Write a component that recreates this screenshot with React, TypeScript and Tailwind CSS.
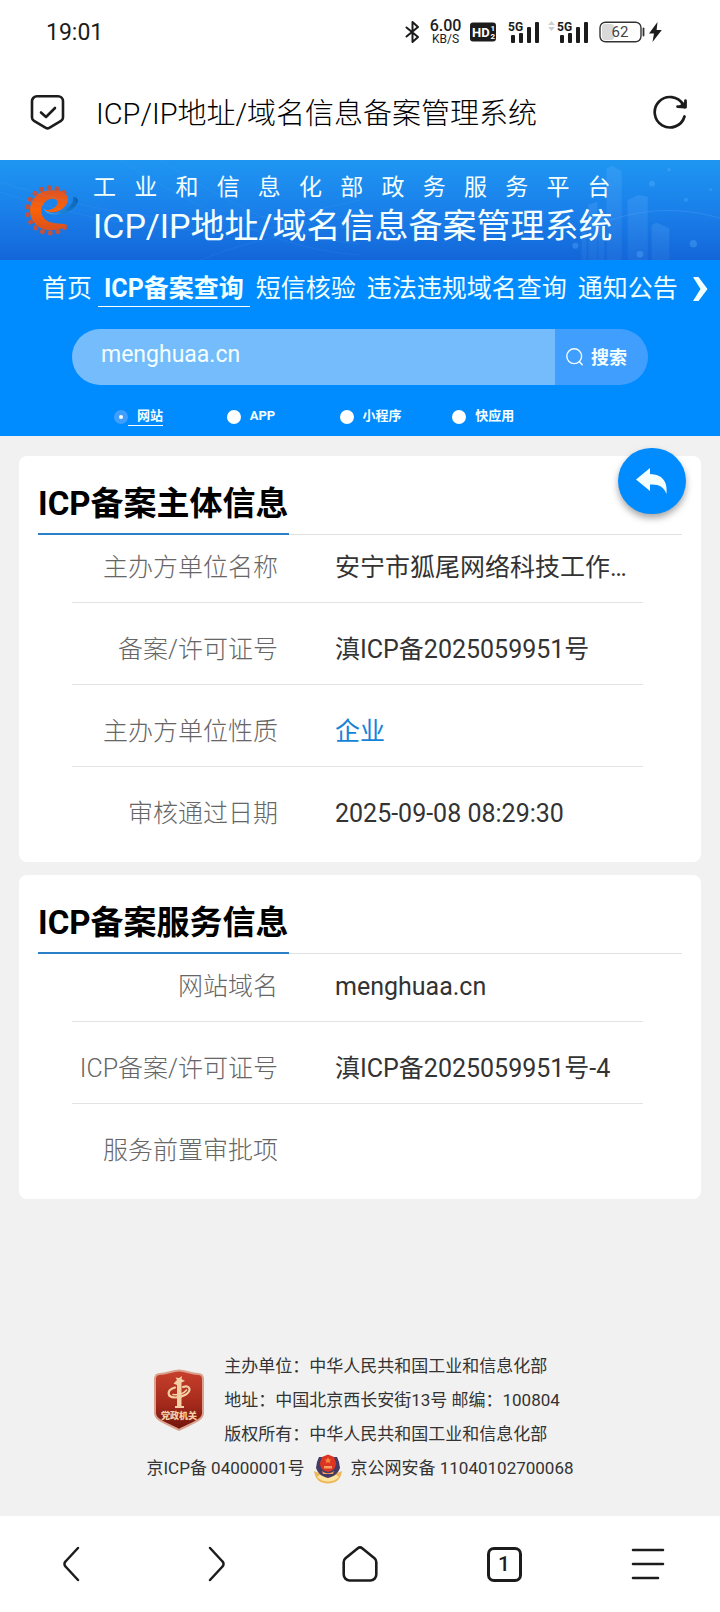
import React from "react";

type Field = { label: string; value: string; link?: boolean };

const subjectFields: Field[] = [
  { label: "主办方单位名称", value: "安宁市狐尾网络科技工作…" },
  { label: "备案/许可证号", value: "滇ICP备2025059951号" },
  { label: "主办方单位性质", value: "企业", link: true },
  { label: "审核通过日期", value: "2025-09-08 08:29:30" },
];

const serviceFields: Field[] = [
  { label: "网站域名", value: "menghuaa.cn" },
  { label: "ICP备案/许可证号", value: "滇ICP备2025059951号-4" },
  { label: "服务前置审批项", value: "" },
];

const navItems = ["首页", "ICP备案查询", "短信核验", "违法违规域名查询", "通知公告"];
const kinds = ["网站", "APP", "小程序", "快应用"];

function Signal() {
  return (
    <svg width="32" height="24" viewBox="0 0 32 24" fill="#1c1c1c" aria-hidden="true">
      <text x="0" y="11" fontSize="12" fontWeight="700" fontFamily="Roboto, sans-serif">5G</text>
      <rect x="3" y="15" width="4" height="8" rx="1" />
      <rect x="11" y="13" width="4" height="10" rx="1" />
      <rect x="19" y="7" width="4" height="16" rx="1" />
      <rect x="27" y="2" width="4" height="21" rx="1" />
    </svg>
  );
}

function StatusBar() {
  return (
    <div className="flex h-16 items-center justify-between pr-[58px] pl-[46px] text-[#1c1c1c]">
      <span className="pt-[2px] text-[23px]">19:01</span>
      <div className="flex items-center">
        <svg className="mr-[9px]" width="15" height="24" viewBox="0 0 15 24" fill="none" stroke="#1c1c1c" strokeWidth="2" strokeLinejoin="round" strokeLinecap="round" aria-hidden="true">
          <path d="M1.5 7.5 13 17 7.5 22V2L13 7 1.5 16.5" />
        </svg>
        <div className="mr-2 flex w-[33px] flex-col items-center">
          <span className="text-[16px] leading-[14px] font-medium">6.00</span>
          <span className="text-[12px] leading-[12px]">KB/S</span>
        </div>
        <svg className="mr-3" width="26" height="20" viewBox="0 0 26 20" aria-hidden="true">
          <rect width="26" height="19" y="0.5" rx="3" fill="#1c1c1c" />
          <g fill="#fff" fontFamily="Roboto, sans-serif" fontWeight="700">
            <text x="2" y="15" fontSize="13">HD</text>
            <text x="20.500" y="9" fontSize="8">1</text>
            <text x="20.500" y="17" fontSize="8">2</text>
          </g>
        </svg>
        <Signal />
        <svg className="mr-[2px] ml-2 -mt-3" width="7" height="10" viewBox="0 0 7 10" fill="#cfcfcf" aria-hidden="true">
          <path d="M0 4 3.5 0 7 4zM0 6h7L3.5 10z" />
        </svg>
        <Signal />
        <svg className="mr-1 ml-[10px]" width="46" height="22" viewBox="0 0 46 22" aria-hidden="true">
          <rect x="3" y="3" width="12" height="16" rx="3" fill="#d9d9d9" />
          <rect x="1" y="1.2" width="41" height="19.6" rx="5.5" fill="none" stroke="#333" strokeWidth="1.4" />
          <path d="M44.5 7.5v7" stroke="#333" strokeWidth="1.8" strokeLinecap="round" />
          <text x="21" y="16.2" fontSize="15" fill="#444" textAnchor="middle" fontFamily="Roboto, sans-serif">62</text>
        </svg>
        <svg width="13" height="20" viewBox="0 0 13 20" fill="#1c1c1c" aria-hidden="true">
          <path d="M8.5 0 0 11.5h5L3.5 20 12.8 8H7.6z" />
        </svg>
      </div>
    </div>
  );
}

function AddressBar() {
  return (
    <div className="flex h-24 items-center pr-[32px] pl-[30px]">
      <svg className="shrink-0" width="36" height="36" viewBox="0 0 36 36" fill="none" stroke="#1c1c1c" strokeWidth="2.6" strokeLinejoin="round" strokeLinecap="round" aria-hidden="true">
        <path d="M7 2.300h21a5 5 0 0 1 5 5v16.200a4 4 0 0 1-2 3.400L19.300 33.800a3.400 3.400 0 0 1-3.500 0L4 26.900a4 4 0 0 1-2-3.400V7.300a5 5 0 0 1 5-5z" />
        <path d="m11 18.500 5 4.500 9-9" />
      </svg>
      <h1 className="ml-[30px] flex-1 truncate pt-1 text-[29px] leading-[40px] font-light text-black">
        ICP/IP地址/域名信息备案管理系统
      </h1>
      <button type="button" aria-label="刷新" className="shrink-0">
        <svg width="35" height="36" viewBox="0 0 35 36" fill="none" stroke="#1c1c1c" strokeWidth="2.7" strokeLinecap="round" strokeLinejoin="round">
          <path d="M31.500 22.500A15.200 15.200 0 1 1 30 10.500L31.500 13" />
          <path d="M24.500 12.600 32.500 13.200V6.500" />
          <path d="M26 12.500 32.500 13.200V8z" fill="#1c1c1c" strokeWidth="1.500" />
        </svg>
      </button>
    </div>
  );
}

function GearLogo() {
  return (
    <svg className="mt-[13px] shrink-0" width="56" height="53" viewBox="73 85 168 159" aria-hidden="true">
      <defs>
        <linearGradient id="gear" x1="0" y1="0" x2="0" y2="1">
          <stop offset="0" stopColor="#dd5526" />
          <stop offset="0.500" stopColor="#fb6206" />
          <stop offset="1" stopColor="#d9501f" />
        </linearGradient>
        <linearGradient id="swirl" x1="0" y1="0" x2="1" y2="0">
          <stop offset="0" stopColor="#7cc4ee" />
          <stop offset="0.500" stopColor="#1b86cf" />
          <stop offset="1" stopColor="#0a62b4" />
        </linearGradient>
      </defs>
      <path d="M195 216A68 68 0 1 1 195 112" fill="none" stroke="#bf5240" strokeWidth="15" strokeLinecap="round" strokeDasharray="0.100 23.300" />
      <path d="M203 208C190 220 170 224 151 224A60 60 0 0 1 151 104C190 101 207 116 205 134 202 152 180 170 160 170 150 170 142 168 136 162 150 166 168 158 173 145 178 128 152 124 137 138 114 160 124 196 162 202 178 204 193 204 203 208Z" fill="url(#gear)" />
      <path d="M132 158C142 186 200 180 224 154 242 138 236 122 220 124 224 144 204 158 184 168 162 178 142 174 132 158Z" fill="url(#swirl)" />
    </svg>
  );
}

function Banner() {
  return (
    <div className="relative flex h-[100px] overflow-hidden bg-linear-to-b from-[#1f96f2] via-[#1a80ea] to-[#1466d8] pt-[11px] pl-[24px] text-[#f4ffff]">
      <svg className="absolute top-0 right-0" width="180" height="100" viewBox="540 15 540 300" aria-hidden="true">
        <defs>
          <linearGradient id="tower" x1="0" y1="0" x2="0" y2="1">
            <stop offset="0" stopColor="#7fc0ff" stopOpacity="0.18" />
            <stop offset="1" stopColor="#7fc0ff" stopOpacity="0.08" />
          </linearGradient>
        </defs>
        <g fill="url(#tower)">
          <path d="M740 40 755 32 785 48V315H740z" />
          <path d="M803 135 835 120 863 125V315H803z" />
          <path d="M875 210 890 203 928 220V315H875z" />
          <path d="M685 150 712 140V315H685z" />
          <path d="M665 230h15v85h-15zM715 180h18v135h-18z" />
        </g>
        <path d="M700 215C850 150 980 160 1080 190" fill="none" stroke="#62b1fb" strokeOpacity="0.250" strokeWidth="3" />
        <g fill="#5fb2ff" fillOpacity="0.350">
          <circle cx="876" cy="86" r="9" />
          <circle cx="927" cy="44" r="5" />
          <circle cx="978" cy="134" r="6" />
          <circle cx="1000" cy="266" r="11" />
          <circle cx="646" cy="272" r="9" />
          <circle cx="840" cy="298" r="10" />
          <circle cx="1052" cy="104" r="4" />
        </g>
      </svg>
      <svg className="absolute top-0 left-0" width="360" height="100" viewBox="0 0 360 100" fill="none" stroke="#6bbcff" strokeOpacity="0.100" aria-hidden="true">
        <path d="M0 22C90 50 200 80 360 40M0 32C90 60 210 92 360 52M120 0C200 50 280 90 360 95M160 0C230 45 300 80 360 84M200 100C250 80 300 70 360 66" />
      </svg>
      <GearLogo />
      <div className="relative ml-[13px] grid content-start">
        <p className="pr-[2px] text-[23px] leading-[34px] [text-align-last:justify]">工业和信息化部政务服务平台</p>
        <p className="text-[34px] leading-[42px] whitespace-nowrap">ICP/IP地址/域名信息备案管理系统</p>
      </div>
    </div>
  );
}

function SiteNav() {
  return (
    <nav className="flex items-center gap-px pt-[11px] pl-[37px] text-[25px] leading-[35px] whitespace-nowrap text-[#f0ffff]">
      {navItems.map((item, i) => (
        <a
          key={item}
          href="#"
          className={i === 1 ? "border-b border-white px-[6px] font-bold" : "border-b border-transparent px-[5px]"}
        >
          {item}
        </a>
      ))}
      <button type="button" aria-label="更多" className="ml-[9px]">
        <svg width="15" height="24" viewBox="0 0 15 24" fill="#f0ffff">
          <path d="M0 0H5.5L14.5 12 5.5 24H0L7.5 12z" />
        </svg>
      </button>
    </nav>
  );
}

function SearchForm() {
  return (
    <form className="px-[72px] pt-[22px] pb-[10px]" onSubmit={(e) => e.preventDefault()}>
      <div className="flex h-14 overflow-hidden rounded-full">
        <input
          type="text"
          aria-label="搜索内容"
          defaultValue="menghuaa.cn"
          className="min-w-0 flex-1 bg-[#74bcfb] pb-1 pl-[29px] text-[23px] text-[#f4ffff] outline-none"
        />
        <button type="submit" className="flex w-[93px] items-center gap-2 bg-[#409eff] pl-[11px] text-[18px] font-bold text-[#f4ffff]">
          <svg width="17" height="18" viewBox="0 0 17 18" fill="none" stroke="#f4ffff" strokeWidth="1.4" strokeLinecap="round" aria-hidden="true">
            <circle cx="8.2" cy="8.2" r="7.4" />
            <path d="m13.5 13.8 2.7 3" />
          </svg>
          搜索
        </button>
      </div>
      <div className="mr-[83px] ml-[42px] grid grid-cols-4 pt-[22px]">
        {kinds.map((kind, i) => (
          <label key={kind} className="flex items-center text-[13px] leading-[18px] font-bold text-[#f4ffff]">
            <input
              type="radio"
              name="kind"
              defaultChecked={i === 0}
              className="peer size-[14px] shrink-0 appearance-none rounded-full border-[5px] border-white bg-white checked:border-[#409eff]"
            />
            <span className="border-b border-transparent pl-[9px] peer-checked:border-white">{kind}</span>
          </label>
        ))}
      </div>
    </form>
  );
}

function InfoCard({ title, fields }: { title: string; fields: Field[] }) {
  return (
    <section className="rounded-lg bg-white pb-[31px]">
      <div className="mx-[19px] flex border-b border-[#dfe1e4] pt-[23px]">
        <h2 className="-mb-px border-b-2 border-[#2a7fc6] pb-[4px] text-[33px] leading-[50px] font-bold text-black">{title}</h2>
      </div>
      <dl className="mr-[58px] ml-[53px]">
        {fields.map((f) => (
          <div
            key={f.label}
            className="flex border-b border-[#e3e3e3] pt-[30px] pb-[17px] text-[25px] leading-[34px] first:pt-4 last:border-b-0 last:pb-0"
          >
            <dt className="w-[206px] shrink-0 text-right font-light whitespace-nowrap text-[#666]">{f.label}</dt>
            <dd className="ml-[57px] min-w-0 flex-1 truncate text-[#333]">
              {f.link ? <a href="#" className="text-[#1583d8]">{f.value}</a> : f.value}
            </dd>
          </div>
        ))}
      </dl>
    </section>
  );
}

function PartyBadge() {
  return (
    <svg className="mt-[20px] mr-[19px] shrink-0" width="52" height="62" viewBox="0 0 52 62" aria-hidden="true">
      <defs>
        <linearGradient id="badge" x1="0" y1="0" x2="0" y2="1">
          <stop offset="0" stopColor="#c8402c" />
          <stop offset="0.55" stopColor="#a52a1c" />
          <stop offset="1" stopColor="#6f130c" />
        </linearGradient>
      </defs>
      <path d="M26 1.5C33 1.5 38 5 45 5Q50 5 50 10V44C50 52 36 55 26 61 16 55 2 52 2 44V10Q2 5 7 5C14 5 19 1.500 26 1.500Z" fill="url(#badge)" stroke="#d9a28e" strokeWidth="2" />
      <path d="M24 11 22.500 8.500 26 9 29 7 28.500 10 32 12 28.500 13.500V37H31V39H22V37H24V16L20.500 14.500Z" fill="#f3cfa5" />
      <path d="M22 18.500C13 21 14 28.500 22 28.500 30 28.500 37 24 36.500 20 36 17 33 17 30 18" fill="none" stroke="#f3cfa5" strokeWidth="2.200" strokeLinecap="round" />
      <path d="M20 25.500C25 26.500 31 24.500 33.500 21" fill="none" stroke="#f3cfa5" strokeWidth="1.600" strokeLinecap="round" />
      <text x="26" y="50" fontSize="9" fontWeight="900" fill="#f3cfa5" textAnchor="middle" fontFamily="'Noto Sans CJK SC', sans-serif">党政机关</text>
    </svg>
  );
}

function PoliceBadge() {
  return (
    <svg className="mx-[8px] shrink-0" width="30" height="30" viewBox="0 0 30 30" aria-hidden="true">
      <path d="M1 17C2 26 8 29.500 15 29.500S28 26 29 17L24 19H6z" fill="#edb75a" />
      <path d="M4 23C10 29 20 29 26 23L21 19H9z" fill="#fbe3a0" />
      <path d="M15 1 18 3 24 3 26 8 27 14C25 20 20 23 15 24 10 23 5 20 3 14L4 8 6 3 12 3Z" fill="#453b62" />
      <path d="M15 .5 21 3 23 9C23 15 19 17 15 18 11 17 7 15 7 9L9 3Z" fill="#dd3322" />
      <path d="m15 3 1 2.500h2.500L16.500 7l1 2.500L15 8l-2.500 1.500 1-2.500-2-1.500H14z" fill="#f78b3c" />
      <path d="M11 12h8v2.500h-8zM9 17C13 20 17 20 21 17L20 20H10z" fill="#f0a060" />
    </svg>
  );
}

function SiteFooter() {
  return (
    <footer className="mt-auto flex flex-col items-center pt-[149px] pb-[29px] text-[17px] text-[#333]">
      <div className="flex">
        <PartyBadge />
        <div className="pr-[7px] leading-[34px]">
          <p>主办单位：中华人民共和国工业和信息化部</p>
          <p>地址：中国北京西长安街13号 邮编：100804</p>
          <p>版权所有：中华人民共和国工业和信息化部</p>
        </div>
      </div>
      <div className="flex h-9 items-center">
        <a href="#">京ICP备 04000001号</a>
        <PoliceBadge />
        <a href="#">京公网安备 11040102700068</a>
      </div>
    </footer>
  );
}

function BrowserBar() {
  const cell = "flex items-center justify-center";
  return (
    <div className="grid h-24 grid-cols-5 bg-white">
      <button type="button" aria-label="后退" className={cell}>
        <svg width="36" height="36" viewBox="0 0 36 36" fill="none" stroke="#1c1c1c" strokeWidth="2.500" strokeLinecap="round" strokeLinejoin="round">
          <path d="M24 2 11.500 15.500a3.500 3.500 0 0 0 0 5L24 34" />
        </svg>
      </button>
      <button type="button" aria-label="前进" className={cell}>
        <svg width="36" height="36" viewBox="0 0 36 36" fill="none" stroke="#1c1c1c" strokeWidth="2.500" strokeLinecap="round" strokeLinejoin="round">
          <path d="M12 2 24.500 15.500a3.500 3.500 0 0 1 0 5L12 34" />
        </svg>
      </button>
      <button type="button" aria-label="主页" className={cell}>
        <svg width="36" height="36" viewBox="0 0 36 36" fill="none" stroke="#1c1c1c" strokeWidth="2.600" strokeLinejoin="round">
          <path d="M15.500 2.400a4 4 0 0 1 5 0L32.500 12.300a5 5 0 0 1 1.800 3.800V28.500a6 6 0 0 1-6 6H7.700a6 6 0 0 1-6-6V16.100a5 5 0 0 1 1.800-3.800z" />
        </svg>
      </button>
      <button type="button" aria-label="标签页" className={cell}>
        <span className="flex h-[35px] w-[35px] items-center justify-center rounded-[7px] border-[3px] border-[#1c1c1c] text-[21px] leading-none font-medium text-[#1c1c1c]">1</span>
      </button>
      <button type="button" aria-label="菜单" className={cell}>
        <svg width="34" height="34" viewBox="0 0 34 34" fill="none" stroke="#1c1c1c" strokeWidth="2.600" strokeLinecap="round">
          <path d="M2 3H32M2 17H32M2 31H27" />
        </svg>
      </button>
    </div>
  );
}

export default function App() {
  return (
    <div className="flex min-h-screen flex-col bg-[#f1f1f1] font-[Roboto,'Noto_Sans_CJK_SC',sans-serif]">
      <header className="bg-white">
        <StatusBar />
        <AddressBar />
      </header>
      <div className="bg-[#008cff]">
        <Banner />
        <SiteNav />
        <SearchForm />
      </div>
      <main className="relative flex flex-col gap-[13px] px-[19px] pt-5">
        <InfoCard title="ICP备案主体信息" fields={subjectFields} />
        <InfoCard title="ICP备案服务信息" fields={serviceFields} />
        <button
          type="button"
          aria-label="返回"
          className="absolute top-3 right-[34px] flex h-[66px] w-[68px] items-center justify-center rounded-full bg-[#008cff] shadow-[0_4px_7px_rgba(0,0,0,0.35)]"
        >
          <svg width="32" height="27" viewBox="0 0 32 27" fill="#f4ffff">
            <path d="M0 11.500 14 0V6C25 6.500 32 12 30.500 26 28 19 23 16 14 16.500V23Z" />
          </svg>
        </button>
      </main>
      <SiteFooter />
      <BrowserBar />
    </div>
  );
}
